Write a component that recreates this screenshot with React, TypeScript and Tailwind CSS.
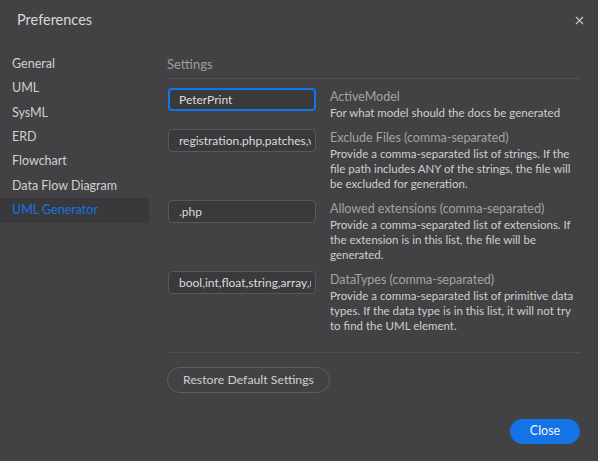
import { X } from 'lucide-react';

const sections = ['General', 'UML', 'SysML', 'ERD', 'Flowchart', 'Data Flow Diagram', 'UML Generator'];

const rows = [
  {
    value: 'PeterPrint',
    label: 'ActiveModel',
    desc: ['For what model should the docs be generated'],
    focused: true,
  },
  {
    value: 'registration.php,patches,vendor',
    label: 'Exclude Files (comma-separated)',
    desc: [
      'Provide a comma-separated list of strings. If the',
      'file path includes ANY of the strings, the file will',
      'be excluded for generation.',
    ],
  },
  {
    value: '.php',
    label: 'Allowed extensions (comma-separated)',
    desc: [
      'Provide a comma-separated list of extensions. If',
      'the extension is in this list, the file will be',
      'generated.',
    ],
  },
  {
    value: 'bool,int,float,string,array,mixed',
    label: 'DataTypes (comma-separated)',
    desc: [
      'Provide a comma-separated list of primitive data',
      'types. If the data type is in this list, it will not try',
      'to find the UML element.',
    ],
  },
];

export default function App() {
  return (
    <div className="w-[598px] h-[461px] bg-[#424244] flex flex-col font-['Lato',sans-serif] text-[#d4d4d4] overflow-hidden">
      {/* header */}
      <div className="h-[40px] flex items-center justify-between pl-[17px] pr-[12px]">
        <h1 className="text-[14.5px] text-[#d8d8d8]">Preferences</h1>
        <X size={13} strokeWidth={2} className="text-[#c8c8c8]" />
      </div>

      <div className="flex flex-1">
        {/* sidebar */}
        <div className="w-[149px] shrink-0 pt-[12px]">
          {sections.map((s) => (
            <div
              key={s}
              className={`h-[24.4px] flex items-center pl-[12px] text-[12.5px] ${s === 'UML Generator' ? 'bg-[#39393b] text-[#1473e6]' : 'text-[#d0d0d0]'}`}
            >
              {s}
            </div>
          ))}
        </div>

        {/* content */}
        <div className="flex-1 min-w-0 pl-[18px] pr-[17px] pt-[16px] flex flex-col">
          <div className="text-[13px] leading-[16px] text-[#9c9c9c] pb-[6px] border-b border-[#515153]">Settings</div>

          <div className="mt-[9px] flex flex-col gap-[9px]">
            {rows.map((r) => (
              <div key={r.label} className="flex items-start">
                <input
                  readOnly
                  value={r.value}
                  className={`ml-px w-[148px] h-[23px] shrink-0 rounded-[4px] bg-[#3a3a3c] pr-[4px] text-[12px] text-[#dcdcdc] outline-none ${r.focused ? 'border-2 border-[#1473e6] pl-[9px]' : 'border border-[#58585a] pl-[10px]'}`}
                />
                <div className="ml-[14px] min-w-0 pt-px leading-[15px] whitespace-nowrap">
                  <div className="text-[#a3a3a3] text-[12.5px] mb-px">{r.label}</div>
                  {r.desc.map((line) => (
                    <div key={line} className="text-[#cfcfcf] text-[11.5px]">{line}</div>
                  ))}
                </div>
              </div>
            ))}
          </div>

          <div className="mt-[19px] border-t border-[#515153]" />

          <div className="mt-[13px]">
            <button className="h-[26px] w-[163px] rounded-full border border-[#5d5d5f] text-[12.3px] text-[#d0d0d0]">
              Restore Default Settings
            </button>
          </div>

          <div className="mt-[26px] flex justify-end pr-px">
            <button className="h-[25px] w-[70px] rounded-full bg-[#1473e6] text-[12.5px] text-[#eef4ff]">Close</button>
          </div>
        </div>
      </div>
    </div>
  );
}
